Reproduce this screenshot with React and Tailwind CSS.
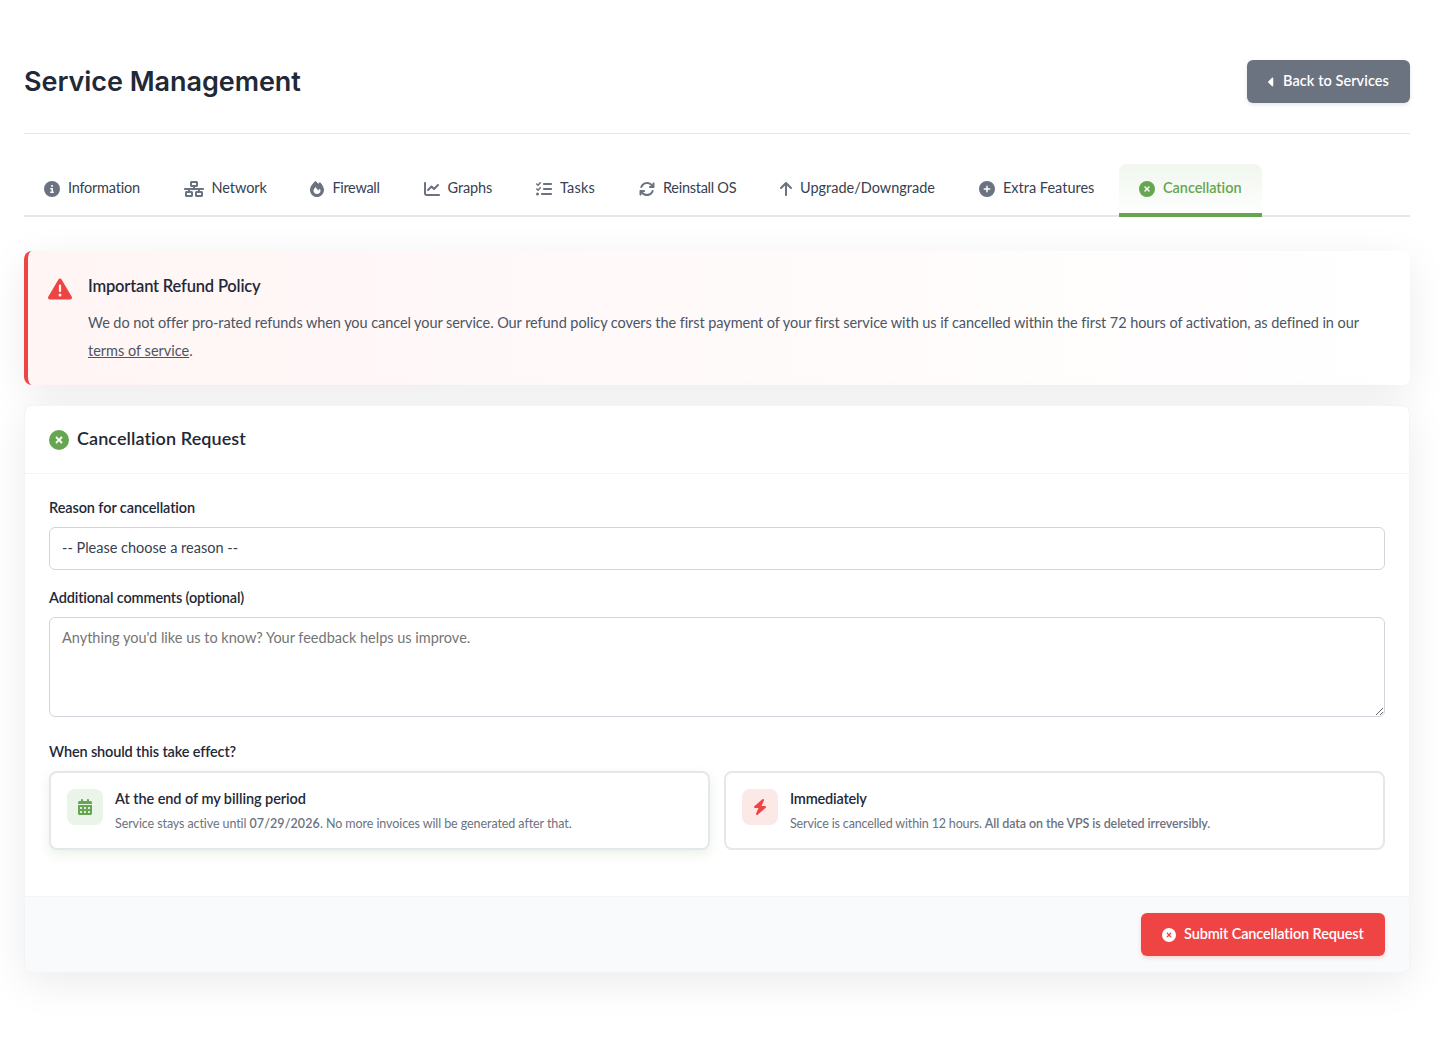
import React from 'react';
import {
  FaCaretLeft, FaCircleInfo, FaNetworkWired, FaFire, FaChartLine, FaListCheck, FaArrowsRotate,
  FaArrowUp, FaCirclePlus, FaCircleXmark, FaTriangleExclamation, FaCalendarDays, FaBolt,
} from 'react-icons/fa6';

const tabs = [
  { label: 'Information', Icon: FaCircleInfo, icon: 'w-4', text: 'w-[71.6px] tracking-[-0.23px]' },
  { label: 'Network', Icon: FaNetworkWired, icon: 'w-5', text: 'w-[54.8px] tracking-[-0.1px]' },
  { label: 'Firewall', Icon: FaFire, icon: 'w-[14px]', text: 'w-[47.2px] tracking-[-0.3px]' },
  { label: 'Graphs', Icon: FaChartLine, icon: 'w-4', text: 'w-[44.4px] tracking-[-0.12px]' },
  { label: 'Tasks', Icon: FaListCheck, icon: 'w-4', text: 'w-[35px] tracking-[0.2px]' },
  { label: 'Reinstall OS', Icon: FaArrowsRotate, icon: 'w-4', text: 'w-[73px] tracking-[-0.27px]' },
  { label: 'Upgrade/Downgrade', Icon: FaArrowUp, icon: 'w-[12px]', text: 'w-[135px]' },
  { label: 'Extra Features', Icon: FaCirclePlus, icon: 'w-4', text: 'w-[92px]' },
  { label: 'Cancellation', Icon: FaCircleXmark, icon: 'w-4', text: 'w-[79px] tracking-[-0.05px]', active: true },
];

function Tab({ label, Icon, icon, text, active }) {
  return (
    <button
      className={
        'flex h-[53px] items-center gap-2 rounded-t-lg border-b-4 px-5 whitespace-nowrap ' +
        (active
          ? 'border-[#66a650] bg-linear-to-b from-[#f1f7ef] to-[#fdfefd] font-semibold text-[#66a650]'
          : 'border-transparent text-[#374151]')
      }
    >
      <Icon className={'h-4 shrink-0 ' + icon + (active ? '' : ' text-[#6b7280]')} />
      <span className={'pb-[2px] text-left ' + text}>{label}</span>
    </button>
  );
}

function Option({ Icon, tile, shadow, title, titleClass, children }) {
  return (
    <div className={'flex h-[79px] items-start gap-3 rounded-lg border-2 border-[#e5e7eb] bg-white p-4 whitespace-nowrap ' + shadow}>
      <div className={'flex h-9 w-9 shrink-0 items-center justify-center rounded-lg ' + tile}>
        <Icon className="h-4 w-4" />
      </div>
      <div>
        <div className={'h-[22px] leading-[20px] font-semibold text-[#1f2937] ' + titleClass}>{title}</div>
        <div className="mt-[3px] text-[12.5px] leading-[20px] text-[#6b7280]">{children}</div>
      </div>
    </div>
  );
}

export default function App() {
  return (
    <main className="min-h-[1041px] bg-white pt-[60px] pr-[30px] pl-6 font-['Lato',sans-serif] text-[14.5px] [font-variant-ligatures:none]">
      <header className="flex h-[74px] items-start justify-between border-b border-[#e5e7eb]">
        <h1 className="font-['Inter',sans-serif] text-[27px] leading-[43px] font-semibold tracking-[-0.05px] text-[#1f2937]">Service Management</h1>
        <button className="flex h-[43px] w-[163px] items-center rounded-md bg-[#6b7280] pl-5 font-semibold text-white shadow-[0_2px_4px_rgba(0,0,0,0.1)]">
          <FaCaretLeft className="h-[14px] w-[9px]" />
          <span className="ml-[7px] pb-[2px] tracking-[0.07px] whitespace-nowrap">Back to Services</span>
        </button>
      </header>

      <nav className="mt-[30px] flex h-[53px] gap-1 bg-[linear-gradient(#e5e7eb,#e5e7eb)] bg-[length:100%_2px] bg-bottom bg-no-repeat">
        {tabs.map((t) => <Tab key={t.label} {...t} />)}
      </nav>

      <section className="mt-[34px] flex h-[134px] rounded-lg border-l-4 border-[#ef4444] bg-linear-to-r from-[#fff5f5] to-white pt-6 pl-5 shadow-[0_10px_40px_rgba(0,0,0,0.08)]">
        <FaTriangleExclamation className="mt-[2px] h-6 w-6 shrink-0 text-[#ef4444]" />
        <div className="ml-4 whitespace-nowrap">
          <h2 className="text-[16.5px] leading-[22px] font-semibold tracking-[-0.19px] text-[#1f2937]">Important Refund Policy</h2>
          <p className="mt-[12px] leading-[28px] tracking-[-0.07px] text-[#4b5563]">
            We do not offer pro-rated refunds when you cancel your service. Our refund policy covers the first payment of your first service with us if cancelled within the first 72 hours of activation, as defined in our
            <br />
            <a href="#" className="tracking-normal underline">terms of service</a>.
          </p>
        </div>
      </section>

      <section className="mt-5 rounded-lg border border-[#f3f4f6] bg-white shadow-[0_10px_40px_rgba(0,0,0,0.08)]">
        <div className="flex h-[68px] items-center border-b border-[#f3f4f6] pl-6">
          <FaCircleXmark className="h-5 w-5 text-[#66a650]" />
          <h2 className="ml-2 pb-[2px] text-[18px] font-semibold tracking-[0.08px] text-[#1f2937]">Cancellation Request</h2>
        </div>

        <div className="h-[422px] px-6 pt-6">
          <label className="block h-[29px] leading-5 font-semibold tracking-[-0.1px] text-[#1f2937]">Reason for cancellation</label>
          <div className="flex h-[43px] items-center rounded-md border border-[#d1d5db] px-3 pb-[2px] text-[#374151]">-- Please choose a reason --</div>
          <label className="mt-[18px] block h-[29px] leading-5 font-semibold tracking-[-0.15px] text-[#1f2937]">Additional comments (optional)</label>
          <textarea
            className="block h-[100px] w-full resize-y rounded-md border border-[#d1d5db] px-3 py-[10px] leading-5 placeholder:text-[#757575]"
            placeholder="Anything you'd like us to know? Your feedback helps us improve."
          />
          <div className="mt-[25px] h-[29px] leading-5 font-semibold tracking-[-0.14px] text-[#1f2937]">When should this take effect?</div>
          <div className="grid grid-cols-2 gap-[14px]">
            <Option
              Icon={FaCalendarDays}
              tile="bg-[#ebf4e9] text-[#66a650]"
              shadow="shadow-[0_4px_12px_rgba(102,166,80,0.15)]"
              title="At the end of my billing period"
              titleClass="tracking-[-0.07px]"
            >
              <span className="tracking-[-0.1px]">Service stays active until </span>
              <strong className="font-semibold tracking-[0.1px]">07/29/2026</strong>
              <span className="tracking-[-0.08px]">. No more invoices will be generated after that.</span>
            </Option>
            <Option
              Icon={FaBolt}
              tile="bg-[#fde8e8] text-[#ef4444]"
              shadow=""
              title="Immediately"
              titleClass="tracking-[-0.2px]"
            >
              <span className="tracking-[-0.16px]">Service is cancelled within 12 hours. </span>
              <strong className="font-semibold tracking-[-0.09px]">All data on the VPS is deleted irreversibly.</strong>
            </Option>
          </div>
        </div>

        <div className="flex h-[76px] items-start justify-end rounded-b-lg border-t border-[#f3f4f6] bg-[#f9fafb] px-6 pt-4">
          <button className="flex h-[43px] w-[244px] items-center rounded-md bg-[#ef4444] pl-[21px] font-semibold text-white shadow-[0_2px_4px_rgba(239,68,68,0.2)]">
            <FaCircleXmark className="h-[14px] w-[14px]" />
            <span className="ml-2 pb-[2px] tracking-[-0.14px] whitespace-nowrap">Submit Cancellation Request</span>
          </button>
        </div>
      </section>
    </main>
  );
}
